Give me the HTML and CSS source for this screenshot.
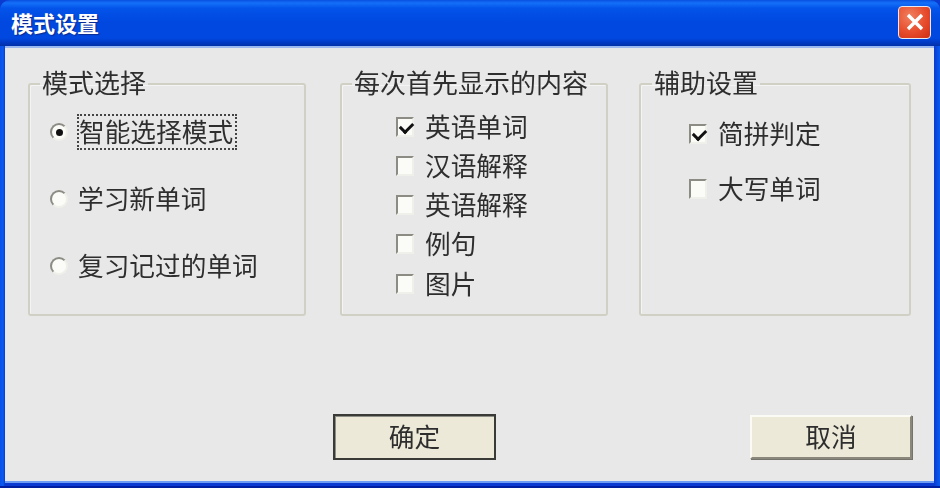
FILE: index.html
```html
<!DOCTYPE html>
<html>
    <head>
        <meta charset="utf-8" />
        <meta name="viewport" content="width=device-width, initial-scale=1" />
        <link rel="stylesheet" href="styles.css">
    </head>
    <body>
        <div class="window">
            <div class="titlebar">
                <span class="title">模式设置</span>
                <div class="close">
                    <svg width="22" height="22" viewBox="0 0 22 22">
                        <path d="M4 4 L18 18 M18 4 L4 18" stroke="#fff" stroke-width="3.4" fill="none"/>
                    </svg>
                </div>
            </div>
            <div class="content">
                <div class="groups">
                    <fieldset class="group mode">
                        <legend>模式选择</legend>
                        <div class="rows">
                            <div class="row"><span class="radio on"></span><span class="focus">智能选择模式</span></div>
                            <div class="row"><span class="radio"></span><span>学习新单词</span></div>
                            <div class="row"><span class="radio"></span><span>复习记过的单词</span></div>
                        </div>
                    </fieldset>
                    <fieldset class="group show">
                        <legend>每次首先显示的内容</legend>
                        <div class="rows">
                            <div class="row"><span class="check on"></span><span>英语单词</span></div>
                            <div class="row"><span class="check"></span><span>汉语解释</span></div>
                            <div class="row"><span class="check"></span><span>英语解释</span></div>
                            <div class="row"><span class="check"></span><span>例句</span></div>
                            <div class="row"><span class="check"></span><span>图片</span></div>
                        </div>
                    </fieldset>
                    <fieldset class="group help">
                        <legend>辅助设置</legend>
                        <div class="rows">
                            <div class="row"><span class="check on"></span><span>简拼判定</span></div>
                            <div class="row"><span class="check"></span><span>大写单词</span></div>
                        </div>
                    </fieldset>
                </div>
                <div class="buttons">
                    <button class="btn default">确定</button>
                    <button class="btn">取消</button>
                </div>
            </div>
        </div>
    </body>
</html>
```

FILE: styles.css
```css
* {
    padding: 0;
    margin: 0;
    box-sizing: border-box;
}

html, body {
    width: 940px;
    height: 488px;
    overflow: hidden;
    background: #0a3ad0;
}

body {
    font-family: "Noto Sans CJK SC", "Liberation Sans", sans-serif;
    font-size: 25.7px;
    color: #2e2e2e;
}

.window {
    display: flex;
    flex-direction: column;
    height: 488px;
    padding: 0 6px 5px 5px;
    border-radius: 10px 10px 0 0;
    background: linear-gradient(90deg, #0a50e8 0, #0a5cf0 3px, #0a3ad0 5px, #0a3ad0 934px, #0a5cf0 100%);
    border-bottom: 2px solid #001ea0;
    overflow: hidden;
    filter: blur(0.7px);
}

.titlebar {
    display: flex;
    flex: none;
    align-items: center;
    justify-content: space-between;
    height: 46px;
    margin: 0 -6px 0 -5px;
    padding: 0 9px 2px 11px;
    background: linear-gradient(180deg, #0a50e0 0, #1470f8 3px, #0454ea 8px, #0048e0 22px, #0048e0 38px, #0238c0 43px, #0230a8 46px);
}

.title {
    color: #fff;
    font-size: 22px;
    font-weight: 700;
    text-shadow: 1px 1px 1px #0a2a90;
}

.close {
    display: flex;
    align-items: center;
    justify-content: center;
    width: 33px;
    height: 33px;
    border: 1px solid #e8e8f0;
    border-radius: 4px;
    background: radial-gradient(circle at 35% 30%, #f08060 0, #e85030 50%, #d02c10 100%);
}

.content {
    display: flex;
    flex: 1;
    flex-direction: column;
    background: #e8e8e8;
    border-top: 2px solid #9cb8f0;
    box-shadow: 0 2px 0 #6c9cf4;
}

.groups {
    display: flex;
    padding: 21px 0 0 23px;
}

fieldset.group {
    height: 247px;
    border: 2px solid #d0d0c4;
    border-radius: 3px;
    box-shadow: inset 1px 1px 0 #f4f4f4;
}

fieldset.group legend {
    margin-left: 10px;
    padding: 0 2px 4px;
    font-size: 26px;
    line-height: 26px;
    white-space: nowrap;
}

fieldset.mode {
    width: 278px;
    margin-right: 34px;
}

fieldset.show {
    width: 268px;
    margin-right: 31px;
}

fieldset.help {
    width: 272px;
}

fieldset.help legend {
    margin-left: 11px;
}

.mode .rows {
    padding-left: 20px;
}

.show .rows {
    padding: 8px 0 0 54px;
}

.help .rows {
    padding: 7px 0 0 48px;
}

.row {
    display: flex;
    align-items: center;
    height: 39.25px;
}

.mode .row {
    height: 66.7px;
}

.help .row {
    height: 55px;
}

.row span:last-child {
    margin-left: -1px;
    padding-bottom: 2px;
    line-height: 32px;
    white-space: nowrap;
}

.radio {
    flex: none;
    position: relative;
    width: 18px;
    height: 18px;
    margin-right: 11px;
    border-radius: 50%;
    background: #fbfbf8;
    border: 2px solid;
    border-color: #8c8c84 #f0f0ea #f0f0ea #8c8c84;
}

.radio.on::after {
    content: "";
    position: absolute;
    top: 4px;
    left: 4px;
    width: 7px;
    height: 7px;
    border-radius: 50%;
    background: #111;
}

.check {
    flex: none;
    position: relative;
    width: 18px;
    height: 20px;
    margin-right: 12px;
    background: #fbfbf8;
    border: 2px solid;
    border-color: #8c8c84 #f0f0ea #f0f0ea #8c8c84;
}

.check.on::after {
    content: "";
    position: absolute;
    top: 3px;
    left: 2px;
    width: 10px;
    height: 6px;
    border-left: 3px solid #111;
    border-bottom: 3px solid #111;
    transform: rotate(-45deg);
}

.row .focus {
    margin-left: -3px;
    padding: 0 3px 0 1px;
    outline: 2px dotted #444;
    outline-offset: -1px;
}

.buttons {
    display: flex;
    align-items: flex-start;
    justify-content: space-between;
    padding: 98px 22px 0 328px;
}

.btn {
    width: 162px;
    height: 44px;
    margin-top: 1px;
    padding-bottom: 3px;
    font: inherit;
    color: inherit;
    background: #ece9d8;
    border: 2px solid;
    border-color: #fbfaf4 #8a887c #8a887c #fbfaf4;
    box-shadow: 1px 1px 0 #75736a;
}

.btn.default {
    width: 163px;
    height: 46px;
    margin-top: 0;
    border-color: #3a3a36;
    box-shadow: inset 1px 1px 0 #8e8e88;
}
```
